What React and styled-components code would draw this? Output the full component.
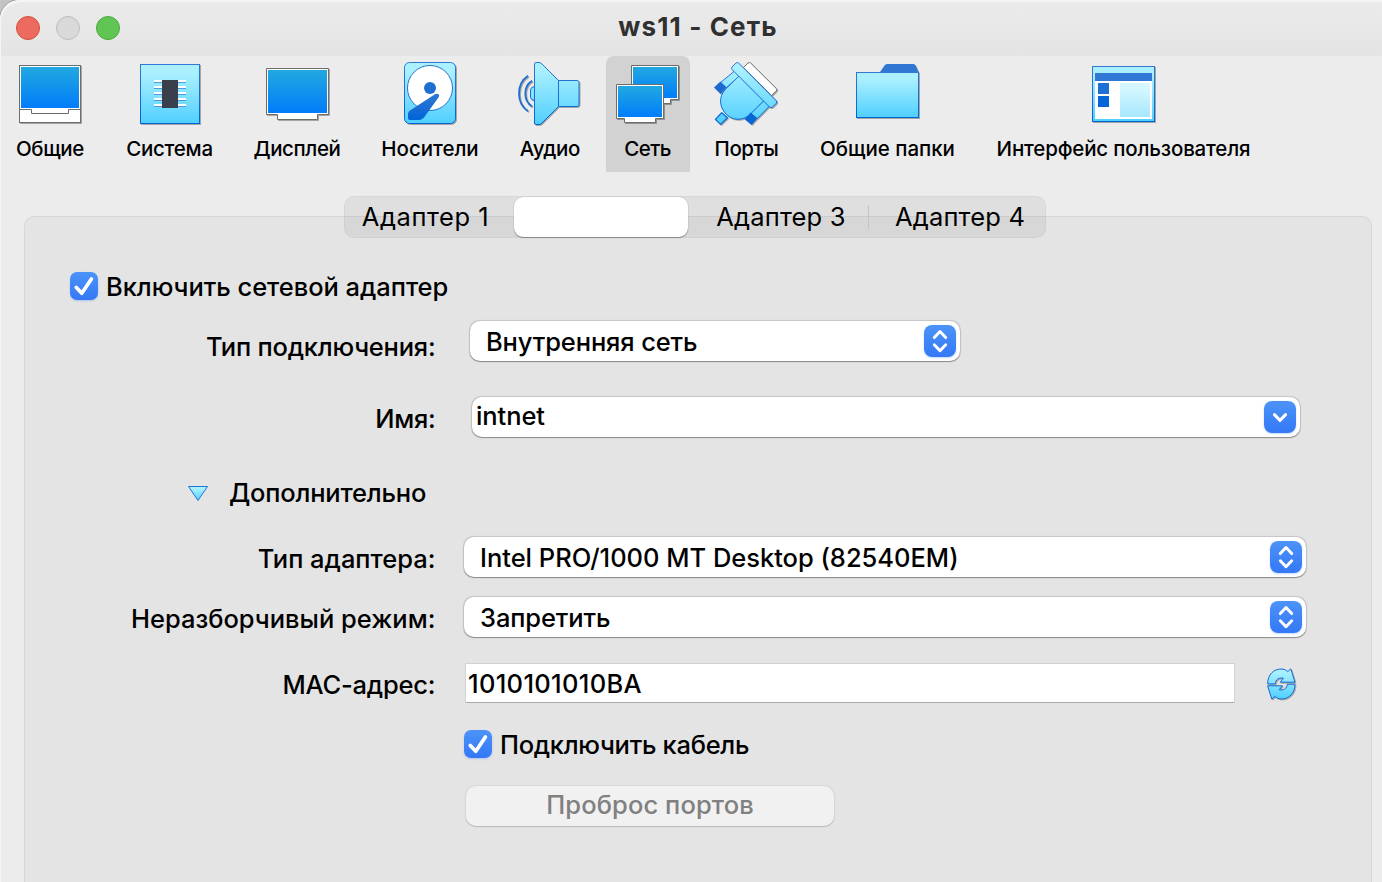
import React from 'react';
import styled, { createGlobalStyle, css } from 'styled-components';

const GlobalStyle = createGlobalStyle`
  * { box-sizing: border-box; }
  html, body { margin: 0; padding: 0; }
  body {
    width: 1382px;
    height: 882px;
    overflow: hidden;
    background: #c4c4c4;
    font-family: Inter, 'Liberation Sans', sans-serif;
    color: #000;
  }
`;

const Window = styled.div`
  width: 1382px;
  height: 882px;
  overflow: hidden;
  display: flex;
  flex-direction: column;
  background: #ececec;
  border-top-left-radius: 20px;
  box-shadow: inset 1px 1px 0 #f6f6f6, 0 0 0 1px #a0a0a0;
`;

const TitleBar = styled.header`
  flex: none;
  height: 56px;
  display: grid;
  grid-template-columns: 120px 1fr 108px;
  align-items: center;
  background: linear-gradient(#ebebeb, #e4e4e4);
  border-top-left-radius: 20px;
  box-shadow: inset 1px 2px 0 #f5f5f5;
`;

const Lights = styled.div`
  display: flex;
  gap: 16px;
  padding-left: 16px;
`;

const Light = styled.span`
  width: 24px;
  height: 24px;
  border-radius: 50%;
  background: ${(p) => p.$fill};
  border: 1px solid ${(p) => p.$edge};
`;

const Title = styled.h1`
  margin: 0;
  padding: 0 0 2px 2px;
  text-align: center;
  font-size: 26px;
  line-height: 32px;
  font-weight: 700;
  letter-spacing: 1.13px;
  color: #303030;
`;

const Toolbar = styled.nav`
  flex: none;
  display: flex;
  height: 116px;
`;

const Tool = styled.div`
  flex: none;
  width: ${(p) => p.$width}px;
  margin-left: ${(p) => p.$gap || 0}px;
  display: flex;
  flex-direction: column;
  align-items: center;
  padding-top: 5px;
  border-radius: 8px 8px 0 0;
  ${(p) => p.$active && css`background: #d2d2d2;`}
`;

const ToolLabel = styled.span`
  margin-top: 9px;
  font-size: 20.5px;
  line-height: 25px;
  font-weight: 500;
  white-space: nowrap;
  letter-spacing: ${(p) => p.$track}px;
  padding-right: ${(p) => p.$back || 0}px;
`;

const ToolIcon = styled.svg`
  display: block;
  width: 66px;
  height: 66px;
  filter: drop-shadow(1px 1px 0 rgba(0, 0, 0, 0.3));
`;

const Content = styled.main`
  flex: 1;
  display: flex;
  flex-direction: column;
  align-items: stretch;
  padding: 24px 10px 0 24px;
`;

const Tabs = styled.div`
  flex: none;
  align-self: center;
  z-index: 1;
  width: 702px;
  height: 42px;
  margin: 0 6px -22px 0;
  display: grid;
  grid-template-columns: 169px 176px 179px 176px;
  border-radius: 10px;
  background: rgba(0, 0, 0, 0.055);
  border: 1px solid rgba(0, 0, 0, 0.035);
`;

const Tab = styled.div`
  display: flex;
  align-items: center;
  justify-content: center;
  font-size: 25.5px;
  line-height: 30px;
  letter-spacing: ${(p) => p.$track || 0}px;
  padding-left: ${(p) => p.$shift || 0}px;
  padding-right: ${(p) => p.$back || 0}px;
  background: ${(p) => (p.$divided
    ? 'linear-gradient(#c4c4c4, #c4c4c4) right center / 1px 24px no-repeat'
    : 'none')};
`;

const SelectedTab = styled.div`
  border-radius: 9px;
  margin-right: 2px;
  background: #fff;
  box-shadow: 0 1px 1px rgba(0, 0, 0, 0.35), 0 0 1px rgba(0, 0, 0, 0.25);
`;

const Panel = styled.section`
  flex: 1;
  background: #e4e4e4;
  border: 1px solid #d7d7d7;
  border-bottom: 0;
  border-radius: 10px 10px 0 0;
  padding-top: 55px;
`;

const Row = styled.div`
  display: grid;
  grid-template-columns: 411px 1fr;
  height: 40px;
  margin-top: ${(p) => p.$gap}px;
`;

const FieldLabel = styled.label`
  display: flex;
  align-items: center;
  justify-content: flex-end;
  padding-top: ${(p) => 2 * p.$drop}px;
  padding-right: 0.6px;
  font-size: 25.5px;
  line-height: 30px;
  font-weight: 500;
  white-space: nowrap;
  letter-spacing: ${(p) => p.$track}px;
`;

const Cell = styled.div`
  display: flex;
  align-items: center;
  padding-left: ${(p) => p.$indent}px;
`;

const Value = styled.span`
  font-size: 25.5px;
  line-height: 30px;
  font-weight: 500;
  white-space: nowrap;
  letter-spacing: ${(p) => p.$track}px;
`;

const Combo = styled.div`
  width: ${(p) => p.$width}px;
  height: 40px;
  display: flex;
  align-items: center;
  justify-content: space-between;
  padding: 0 4px 0 ${(p) => (p.$editable ? 4 : 16)}px;
  border-radius: 10px;
  background: #fff;
  box-shadow: 0 1px 1px rgba(0, 0, 0, 0.3), 0 0 1px 0.5px rgba(0, 0, 0, 0.14);

  ${Value} {
    ${(p) => (p.$editable ? 'padding-bottom: 2px;' : 'padding-top: 2px;')}
  }
`;

const ArrowBox = styled.span`
  flex: none;
  width: 32px;
  height: 32px;
  border-radius: 8px;
  background: linear-gradient(#4c93f8, #3478f6);
  box-shadow: 0 1px 2px rgba(52, 120, 246, 0.3);
  svg { display: block; width: 32px; height: 32px; }
`;

const CheckRow = styled.label`
  display: flex;
  align-items: center;
  gap: 8px;
  height: 28px;
  padding-left: ${(p) => p.$indent}px;
  margin-top: ${(p) => p.$gap || 0}px;
`;

const CheckBox = styled.span`
  flex: none;
  width: 28px;
  height: 28px;
  border-radius: 7px;
  background: linear-gradient(#4c93f8, #3478f6);
  box-shadow: 0 1px 2px rgba(52, 120, 246, 0.3);
  svg { display: block; width: 28px; height: 28px; }
`;

const CheckText = styled(Value)`
  padding-top: 2px;
`;

const Disclosure = styled.div`
  display: flex;
  align-items: center;
  height: 30px;
  margin-top: 41px;
  padding-left: 162px;
  gap: 20px;
  svg { display: block; width: 22px; height: 18px; margin-bottom: 1px; }
`;

const MacInput = styled.div`
  width: 768px;
  height: 38px;
  display: flex;
  align-items: center;
  padding: 2px 0 0 2px;
  background: #fff;
  box-shadow: 0 1px 0 #a9a9a9, 0 0 0 1px #d2d2d2;
`;

const RefreshIcon = styled.svg`
  display: block;
  width: 31px;
  height: 34px;
  margin: 1px 0 0 32px;
  filter: drop-shadow(1px 1px 0 rgba(0, 0, 0, 0.25));
`;

const PushButton = styled.div`
  width: 368px;
  height: 40px;
  margin: 28px 0 0 441px;
  display: flex;
  align-items: center;
  justify-content: center;
  padding-bottom: 2px;
  border-radius: 10px;
  color: #808080;
  background: #f1f1f1;
  box-shadow: 0 1px 1px rgba(0, 0, 0, 0.14), 0 0 1px 0.5px rgba(0, 0, 0, 0.06);
`;

const GradientDefs = styled.svg`
  display: block;
  width: 0;
  height: 0;
`;

const Gradients = () => (
  <GradientDefs aria-hidden="true">
    <defs>
      <linearGradient id="screen" x1="0" y1="0" x2="0" y2="1">
        <stop offset="0" stopColor="#22a8e0" />
        <stop offset="1" stopColor="#007dfa" />
      </linearGradient>
      <linearGradient id="sky" x1="0" y1="0" x2="0" y2="1">
        <stop offset="0.15" stopColor="#aaf0ff" />
        <stop offset="1" stopColor="#50cfff" />
      </linearGradient>
      <linearGradient id="edge" x1="0" y1="0" x2="0" y2="1">
        <stop offset="0" stopColor="#3278d2" />
        <stop offset="1" stopColor="#0064d7" />
      </linearGradient>
      <linearGradient id="skyAll" gradientUnits="userSpaceOnUse" x1="0" y1="2" x2="0" y2="64">
        <stop offset="0.1" stopColor="#aaf0ff" />
        <stop offset="1" stopColor="#50cfff" />
      </linearGradient>
      <linearGradient id="edgeAll" gradientUnits="userSpaceOnUse" x1="0" y1="2" x2="0" y2="64">
        <stop offset="0" stopColor="#3278d2" />
        <stop offset="1" stopColor="#0064d7" />
      </linearGradient>
      <linearGradient id="skySmall" gradientUnits="userSpaceOnUse" x1="0" y1="2" x2="0" y2="32">
        <stop offset="0.1" stopColor="#aaf0ff" />
        <stop offset="1" stopColor="#50cfff" />
      </linearGradient>
    </defs>
  </GradientDefs>
);

const GREY = '#6c6c6c';

const GeneralIcon = () => (
  <ToolIcon viewBox="0 0 66 66">
    <rect x="2.5" y="4.5" width="61" height="57" fill="#fff" stroke={GREY} />
    <rect x="4" y="6" width="58" height="41" fill="url(#screen)" />
    <path d="M2.5 48.5H14.5V52.5H51.5V48.5H63.5" fill="none" stroke={GREY} />
  </ToolIcon>
);

const SystemIcon = () => (
  <ToolIcon viewBox="0 0 66 66">
    <rect x="3.5" y="3.5" width="59" height="59" fill="url(#sky)" stroke="url(#edge)" />
    {[19, 25, 31, 37, 43].map((y) => (
      <g key={y}>
        <rect x="17" y={y} width="32" height="2" fill="#fff" />
        <rect x="17" y={y + 2} width="32" height="1" fill="#4d9ae0" />
      </g>
    ))}
    <rect x="25" y="19" width="16" height="28" fill="#3a404b" />
  </ToolIcon>
);

const DisplayIcon = () => (
  <ToolIcon viewBox="0 0 66 66">
    <path d="M2.5 7.5H64.5V53.5H53.5V58.5H13.5V53.5H2.5Z" fill="#fff" stroke={GREY} />
    <rect x="4" y="9" width="59" height="43" fill="url(#screen)" />
  </ToolIcon>
);

const StorageIcon = () => (
  <ToolIcon viewBox="0 0 66 66">
    <rect x="7.5" y="1.5" width="51" height="61" rx="5" fill="url(#sky)" stroke="url(#edge)" />
    <circle cx="33" cy="27" r="22.5" fill="#fff" stroke="#2a72d0" />
    <circle cx="33" cy="27" r="6" fill="#1f6fd3" />
    <path d="M38.3 33H41Q42.6 33.2 41.8 36L27 56.5Q25 58.9 22.5 59H13Q11 59 11 57V53Q11 50.8 13 49.5Z" fill="url(#edge)" />
  </ToolIcon>
);

const AudioIcon = () => (
  <ToolIcon viewBox="0 0 66 66">
    <path d="M17.5 25.5Q13.5 26 13.5 29V36Q13.5 39 17.5 39.5Z" fill="#86e2ff" stroke="url(#edgeAll)" />
    <path d="M19 1.5H22Q23.5 1.5 25 3L41.5 19.5V45.5L25 62Q23.5 63.5 22 63.5H19Q17.5 63.5 17.5 62V3Q17.5 1.5 19 1.5Z" fill="url(#skyAll)" stroke="url(#edgeAll)" />
    <path d="M41.5 19.5H60Q62 19.5 62 21.5V43.5Q62 45.500 60 45.5H41.5Z" fill="url(#skyAll)" stroke="url(#edgeAll)" />
    <path d="M15 19.8Q8.3 24 8.3 32.5T15 45.4" fill="none" stroke="#1f6fd3" strokeWidth="1.8" />
    <path d="M11 14.8Q2 21 2 32.5T11 50.3" fill="none" stroke="#1f6fd3" strokeWidth="1.8" />
  </ToolIcon>
);

const NetworkIcon = () => (
  <ToolIcon viewBox="0 0 66 66">
    <path d="M16.5 4.5H63.5V38.5H55.5V42.5H30V38.5H16.5Z" fill="#fff" stroke={GREY} />
    <rect x="18" y="6" width="44" height="31" fill="url(#screen)" />
    <path d="M1.5 23.5H48.5V57.5H40.5V61.5H9.5V57.5H1.5Z" fill="#fff" stroke={GREY} />
    <rect x="3" y="25" width="44" height="31" fill="url(#screen)" />
  </ToolIcon>
);

const PortsIcon = () => (
  <ToolIcon viewBox="0 0 66 66" strokeLinejoin="round">
    <path d="M29.500 6.500L34 2Q35.300 1 36.600 2L62.300 27.500Q63.300 28.700 62.300 30L57.500 34.500Z" fill="#fff" stroke={GREY} />
    <path d="M20.500 10L25.500 15L12.300 26.700L6.500 21.500Z" fill="url(#skyAll)" stroke="url(#edgeAll)" />
    <path d="M50 39.500L55.500 45L43.200 57.600L36.500 52Z" fill="url(#skyAll)" stroke="url(#edgeAll)" />
    <path d="M25 15L50 39.500L38 51.500C30 60.500 19 59.800 12.500 53.500C5.500 46.500 4 36 11.700 28Z" fill="url(#skyAll)" stroke="url(#edgeAll)" />
    <path d="M6.400 20.600L12.400 26.600L6.600 33L0 26.400Z" fill="#1c69d0" />
    <path d="M36.600 51.600L43.400 57.600L37.600 64L30.700 58.300Z" fill="#0766d6" />
    <path d="M7.700 51.600L13.400 56.800L6.600 63.400L1.400 58.400Z" fill="#50cfff" stroke="#0766d6" strokeWidth="1.200" />
    <path d="M22 2Q23.300 1 24.600 2L62.300 39.700Q63.300 41 62.300 42.200L58.300 46.200Q57 47.200 55.700 46.200L18 8.500Q17 7.200 18 6Z" fill="url(#skyAll)" stroke="url(#edgeAll)" />
  </ToolIcon>
);

const FoldersIcon = () => (
  <ToolIcon viewBox="0 0 66 66">
    <path d="M25 11L29.5 4.500Q30.500 3 32 3H58.500Q60 3 60.600 4.500L64 12H25Z" fill="#3077d3" />
    <rect x="1.5" y="11.5" width="62" height="45" fill="url(#sky)" stroke="url(#edge)" />
  </ToolIcon>
);

const InterfaceIcon = () => (
  <ToolIcon viewBox="0 0 66 66">
    <rect x="1.5" y="5.5" width="62" height="55" fill="url(#sky)" stroke="url(#edge)" />
    <rect x="4" y="12" width="57" height="46" fill="#fff" />
    <rect x="4" y="12" width="57" height="8" fill="#2f78d3" />
    <rect x="7" y="22" width="11" height="11" fill="#1c70d4" />
    <rect x="7" y="35" width="11" height="11" fill="#0466d6" />
    <rect x="29" y="22" width="30" height="34" fill="url(#sky)" opacity="0.5" />
  </ToolIcon>
);

const UpDown = () => (
  <ArrowBox>
    <svg viewBox="0 0 32 32" fill="none" stroke="#fff" strokeWidth="2.9" strokeLinecap="round" strokeLinejoin="round">
      <path d="M10.3 12.6L16 6.5L21.7 12.6M10.3 19.7L16 25.8L21.7 19.7" />
    </svg>
  </ArrowBox>
);

const Down = () => (
  <ArrowBox>
    <svg viewBox="0 0 32 32" fill="none" stroke="#fff" strokeWidth="3" strokeLinecap="round" strokeLinejoin="round">
      <path d="M10.4 13.6L16 19.4L21.6 13.6" />
    </svg>
  </ArrowBox>
);

const Checked = () => (
  <CheckBox>
    <svg viewBox="0 0 28 28" fill="none" stroke="#fff" strokeWidth="3.7" strokeLinecap="round" strokeLinejoin="round">
      <path d="M6.3 15.4L11.8 21.2L21.4 7" />
    </svg>
  </CheckBox>
);

const Refresh = () => (
  <RefreshIcon viewBox="0 0 31 34" fill="url(#skySmall)" stroke="#1668cf" strokeLinejoin="round">
    <path d="M1.7 16.9C1.5 7.5 8 2 15 2C18 2 20 3 21.8 4.6L24.8 1.8L29 15.2H14.2L17.4 11.2C13 10.4 9.500 12.500 9.300 16.900Z" />
    <path d="M28.900 17.200C29.100 26.500 22.600 32 15.600 32C12.600 32 10.600 31 8.800 29.400L5.800 32.200L1.600 18.800H16.400L13.200 22.800C17.600 23.600 21.100 21.500 21.300 17.200Z" />
  </RefreshIcon>
);

const TOOLS = [
  { label: 'Общие', width: 100, track: -0.35, Icon: GeneralIcon },
  { label: 'Система', width: 140, track: -0.25, back: 1, Icon: SystemIcon },
  { label: 'Дисплей', width: 114, track: -0.4, Icon: DisplayIcon },
  { label: 'Носители', width: 152, track: -0.04, Icon: StorageIcon },
  { label: 'Аудио', width: 88, track: -0.3, Icon: AudioIcon },
  { label: 'Сеть', width: 84, gap: 12, track: -0.6, back: 1, active: true, Icon: NetworkIcon },
  { label: 'Порты', width: 114, track: -0.45, back: 1, Icon: PortsIcon },
  { label: 'Общие папки', width: 168, track: -0.03, back: 1, Icon: FoldersIcon },
  { label: 'Интерфейс пользователя', width: 304, track: -0.18, back: 1, Icon: InterfaceIcon },
];

export default function App() {
  return (
    <>
      <GlobalStyle />
      <Window>
        <Gradients />
        <TitleBar>
          <Lights>
            <Light $fill="#ec6a5e" $edge="#d1503f" />
            <Light $fill="#d9d9d9" $edge="#bcbcbc" />
            <Light $fill="#61c554" $edge="#4ba73c" />
          </Lights>
          <Title>ws11 - Сеть</Title>
        </TitleBar>
        <Toolbar>
          {TOOLS.map(({ label, width, gap, track, back, active, Icon }) => (
            <Tool key={label} $width={width} $gap={gap} $active={active}>
              <Icon />
              <ToolLabel $track={track} $back={back}>{label}</ToolLabel>
            </Tool>
          ))}
        </Toolbar>
        <Content>
          <Tabs>
            <Tab $track={0.56} $back={8}>Адаптер 1</Tab>
            <SelectedTab />
            <Tab $track={0.18} $shift={3} $divided>Адаптер 3</Tab>
            <Tab $track={0.18} $shift={6}>Адаптер 4</Tab>
          </Tabs>
          <Panel>
            <CheckRow $indent={45}>
              <Checked />
              <CheckText $track={-0.05}>Включить сетевой адаптер</CheckText>
            </CheckRow>
            <Row $gap={20}>
              <FieldLabel $drop={6} $track={-0.23}>Тип подключения:</FieldLabel>
              <Cell $indent={34}>
                <Combo $width={490}>
                  <Value $track={-0.13}>Внутренняя сеть</Value>
                  <UpDown />
                </Combo>
              </Cell>
            </Row>
            <Row $gap={37}>
              <FieldLabel $drop={2} $track={-0.3}>Имя:</FieldLabel>
              <Cell $indent={36}>
                <Combo $width={828} $editable>
                  <Value $track={-0.1}>intnet</Value>
                  <Down />
                </Combo>
              </Cell>
            </Row>
            <Disclosure>
              <svg viewBox="0 0 22 18">
                <path d="M1.5 2.5H20.5L11 16.5Z" fill="url(#sky)" stroke="#1f74d8" strokeLinejoin="round" />
              </svg>
              <Value $track={-0.2}>Дополнительно</Value>
            </Disclosure>
            <Row $gap={29}>
              <FieldLabel $drop={1.5} $track={-0.02}>Тип адаптера:</FieldLabel>
              <Cell $indent={28}>
                <Combo $width={842}>
                  <Value $track={-0.02}>Intel PRO/1000 MT Desktop (82540EM)</Value>
                  <UpDown />
                </Combo>
              </Cell>
            </Row>
            <Row $gap={20}>
              <FieldLabel $drop={1.5} $track={-0.01}>Неразборчивый режим:</FieldLabel>
              <Cell $indent={28}>
                <Combo $width={842}>
                  <Value $track={-0.11}>Запретить</Value>
                  <UpDown />
                </Combo>
              </Cell>
            </Row>
            <Row $gap={26}>
              <FieldLabel $drop={2} $track={-0.2}>MAC-адрес:</FieldLabel>
              <Cell $indent={30}>
                <MacInput>
                  <Value $track={0.33}>1010101010BA</Value>
                </MacInput>
                <Refresh />
              </Cell>
            </Row>
            <CheckRow $indent={439} $gap={27}>
              <Checked />
              <CheckText $track={-0.3}>Подключить кабель</CheckText>
            </CheckRow>
            <PushButton>
              <Value $track={0.1}>Проброс портов</Value>
            </PushButton>
          </Panel>
        </Content>
      </Window>
    </>
  );
}
